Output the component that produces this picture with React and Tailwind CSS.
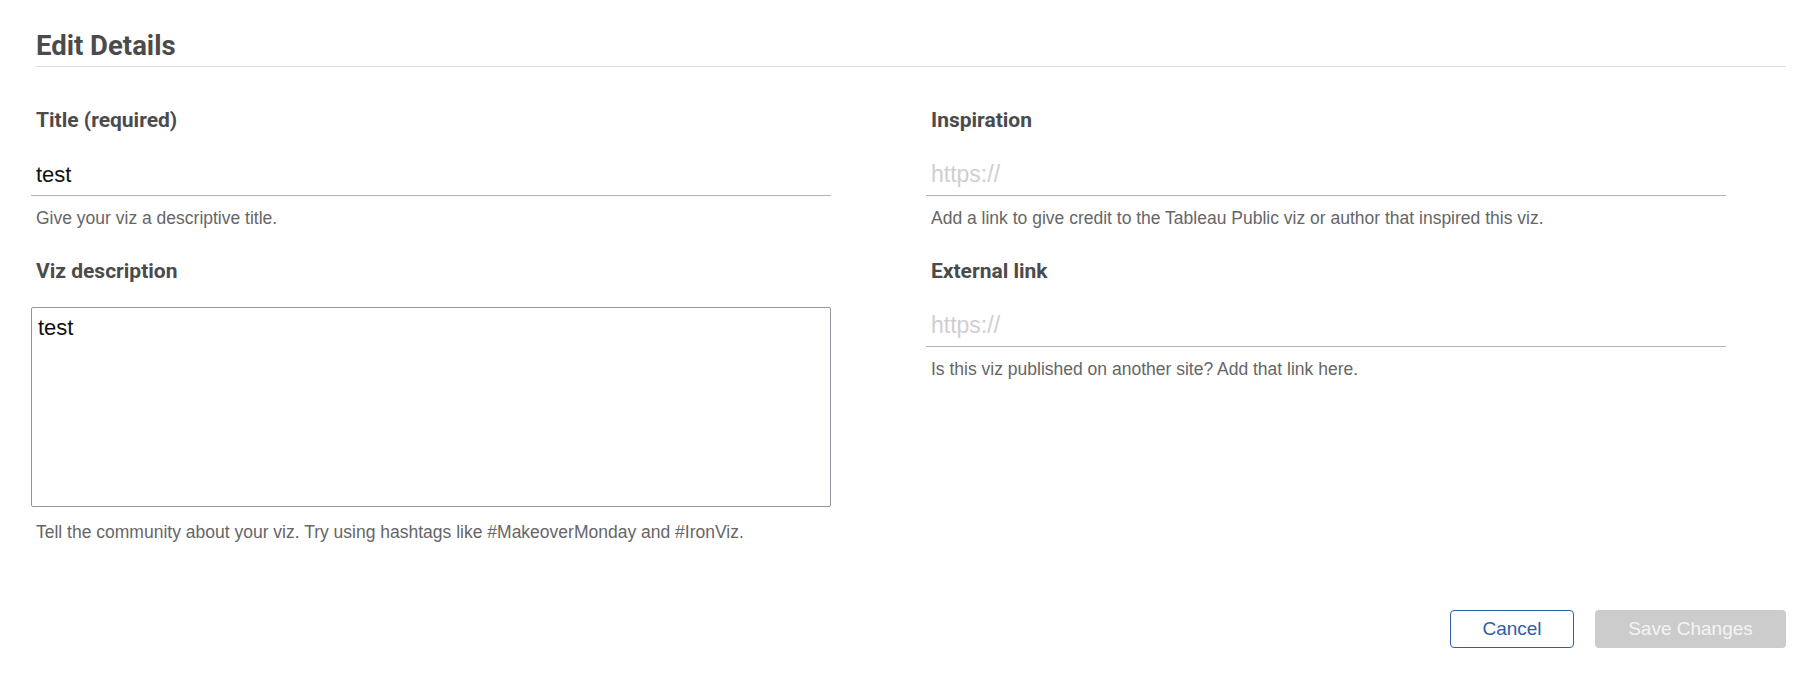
import React from "react";

const labelCls =
  "block pl-[5px] h-[24px] leading-[24px] text-[21px] font-bold text-[#4b4b4b] [font-family:Roboto,'Liberation_Sans',sans-serif]";
const helpCls =
  "pl-[5px] h-[20px] leading-[20px] text-[17.5px] text-[#666666] [font-family:'Liberation_Sans',Arial,sans-serif] whitespace-nowrap";
const inputCls =
  "block w-full h-[41px] pl-[5px] pr-2 border-0 border-b border-[#b3b3b3] bg-transparent outline-none text-[22px] text-[#111111] placeholder:text-[#cfcfcf] placeholder:text-[23px] [font-family:'Liberation_Sans',Arial,sans-serif]";

function LineField({ label, value, placeholder, help, first }) {
  return (
    <div className={first ? "" : "mt-[31px]"}>
      <label className={labelCls}>{label}</label>
      <input
        className={`mt-[23px] ${inputCls}`}
        defaultValue={value}
        placeholder={placeholder}
        type="text"
      />
      <div className={`mt-[12px] ${helpCls}`}>{help}</div>
    </div>
  );
}

export default function App() {
  return (
    <div className="w-full h-[678px] bg-white pl-[36px] pr-[16px] pt-[30px]">
      <div className="border-b border-[#dcdcdc] pb-[4px]">
        <h1 className="h-[32px] leading-[32px] text-[27.5px] font-bold text-[#4b4b4b] [font-family:Roboto,'Liberation_Sans',sans-serif]">
          Edit Details
        </h1>
      </div>

      <div className="-ml-[5px] mt-[41px] grid grid-cols-[800px_800px] gap-x-[95px]">
        <div>
          <LineField
            first
            label="Title (required)"
            value="test"
            help="Give your viz a descriptive title."
          />
          <div className="mt-[31px]">
            <label className={labelCls}>Viz description</label>
            <textarea
              className="mt-[24px] block w-full h-[200px] resize-none rounded-[2px] border border-[#96959f] pt-[7px] pl-[6px] pr-2 outline-none text-[22px] leading-[normal] text-[#111111] [font-family:'Liberation_Sans',Arial,sans-serif]"
              defaultValue="test"
            />
            <div className={`mt-[15px] ${helpCls}`}>
              Tell the community about your viz. Try using hashtags like #MakeoverMonday and #IronViz.
            </div>
          </div>
        </div>
        <div>
          <LineField
            first
            label="Inspiration"
            placeholder="https://"
            help="Add a link to give credit to the Tableau Public viz or author that inspired this viz."
          />
          <LineField
            label="External link"
            placeholder="https://"
            help="Is this viz published on another site? Add that link here."
          />
        </div>
      </div>

      <div className="mt-[68px] flex justify-end gap-[21px]">
        <button className="w-[124px] h-[38px] rounded-[4px] border border-[#2e5ea8] bg-white text-[19px] text-[#2e5ea8] [font-family:'Liberation_Sans',Arial,sans-serif]">
          Cancel
        </button>
        <button
          disabled
          className="w-[191px] h-[38px] rounded-[4px] bg-[#cccccc] text-[19px] text-[#f4f4f4] [font-family:'Liberation_Sans',Arial,sans-serif]"
        >
          Save Changes
        </button>
      </div>
    </div>
  );
}
